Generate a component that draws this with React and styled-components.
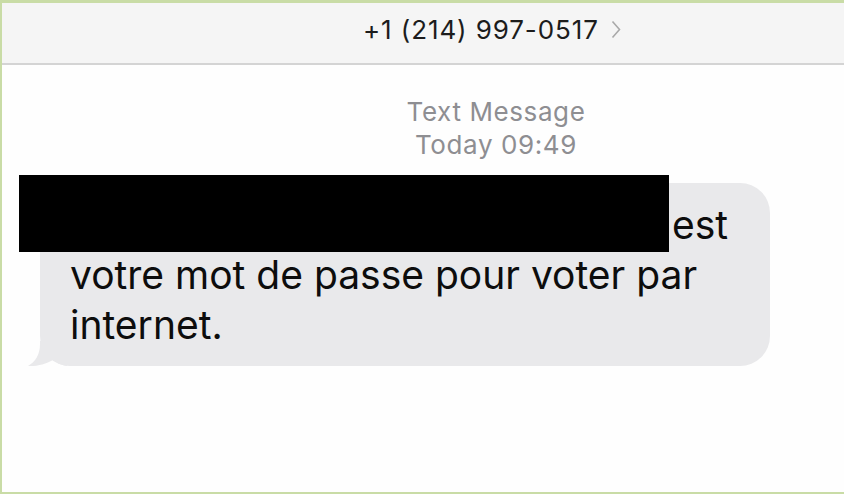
import React from 'react';
import styled, { createGlobalStyle } from 'styled-components';

const Global = createGlobalStyle`
    html, body {
        margin: 0;
        padding: 0;
        background: #ffffff;
    }
    * {
        box-sizing: border-box;
    }
`;

const Frame = styled.div`
    width: 844px;
    height: 494px;
    display: flex;
    flex-direction: column;
    background: #fefefe;
    border-top: 3px solid #c9dca6;
    border-left: 2px solid #c9dca6;
    border-bottom: 2px solid #c9dca6;
    font-family: Inter, "Liberation Sans", sans-serif;
    overflow: hidden;
`;

const Header = styled.div`
    height: 62px;
    display: flex;
    align-items: center;
    gap: 12px;
    padding-left: 361px;
    padding-bottom: 7px;
    background: #f5f5f5;
    border-bottom: 2px solid #d4d4d4;
`;

const Title = styled.span`
    font-size: 26px;
    color: #1c1c1c;
    letter-spacing: 0.9px;
`;

const Meta = styled.div`
    display: flex;
    flex-direction: column;
    align-items: center;
    padding-left: 146px;
    padding-top: 30px;
    color: #8e8e92;
    font-size: 26px;
    letter-spacing: 0.6px;
    line-height: 33px;
`;

const Thread = styled.div`
    padding: 22px 0 0 38px;
`;

const Bubble = styled.div`
    position: relative;
    width: 730px;
    padding: 17px 30px 16px 30px;
    background: #e9e9eb;
    border-radius: 30px;
    font-size: 39px;
    line-height: 50px;
    color: #0d0d0d;
`;

const Blank = styled.span`
    display: inline-block;
    width: 602px;
`;

const Redaction = styled.div`
    position: absolute;
    left: -21px;
    top: -8px;
    width: 650px;
    height: 77px;
    background: #000;
`;

const Tail = styled.svg`
    position: absolute;
    left: -13px;
    bottom: -1px;
`;

const Chevron = () => (
    <svg width="10" height="19" viewBox="0 0 10 19">
        <polyline points="1.5,1.5 8.5,9.5 1.5,17.5" fill="none" stroke="#a9a9a9" strokeWidth="1.6" />
    </svg>
);

const App = () => {
    return (
        <>
            <Global />
            <Frame>
                <Header>
                    <Title>+1 (214) 997-0517</Title>
                    <Chevron />
                </Header>
                <Meta>
                    <span>Text Message</span>
                    <span>Today 09:49</span>
                </Meta>
                <Thread>
                    <Bubble>
                        <Tail width="40" height="26" viewBox="0 0 40 26">
                            <path d="M13 0 L13 3 C13 14 8 21 1 25 C10 25.5 19 23 26 19 C30 22 34 24 40 25 L40 0 Z" fill="#e9e9eb" />
                        </Tail>
                        <Blank />est<br />
                        votre mot de passe pour voter par<br />
                        internet.
                        <Redaction />
                    </Bubble>
                </Thread>
            </Frame>
        </>
    );
};

export default App;
